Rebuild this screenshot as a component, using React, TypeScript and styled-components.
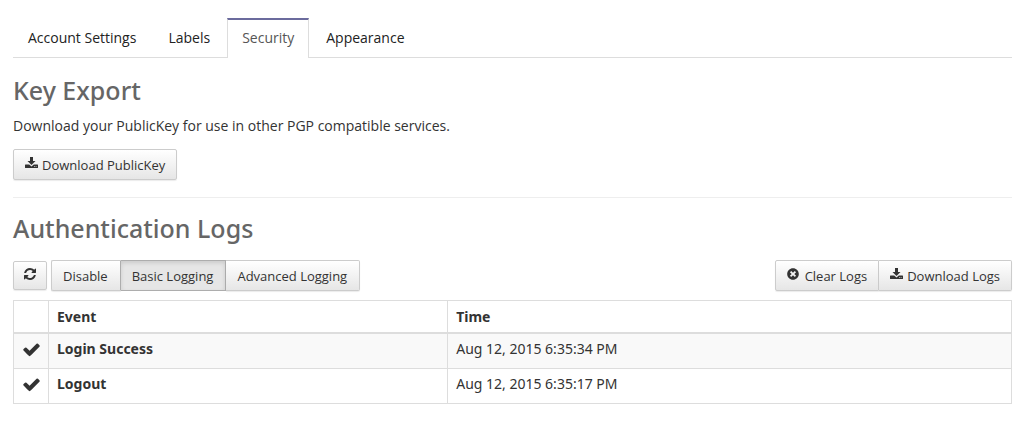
import React from 'react';
import styled, { createGlobalStyle } from 'styled-components';
import { FaTimesCircle } from 'react-icons/fa';

const GlobalStyle = createGlobalStyle`
  * { box-sizing: border-box; }
  body {
    margin: 0;
    background: #fff;
    color: #333;
    font: 14px/20px "Open Sans", "Noto Sans", sans-serif;
  }
`;

const Page = styled.main`
  padding: 18px 12px 24px 13px;
`;

const Tabs = styled.nav`
  display: flex;
  height: 40px;
  border-bottom: 1px solid #ddd;
`;

const Tab = styled.a<{ $active?: boolean }>`
  height: 40px;
  padding: 8px 14px;
  margin-right: 2px;
  border: 1px solid ${p => (p.$active ? '#ddd' : 'transparent')};
  border-top: 2px solid ${p => (p.$active ? '#6b6b9d' : 'transparent')};
  border-bottom: 0;
  background: ${p => (p.$active ? '#fff' : 'transparent')};
  color: ${p => (p.$active ? '#555' : '#222')};
  text-decoration: none;
`;

const Heading = styled.h2`
  margin: 0;
  padding: 16px 0 10px;
  color: #666;
  font-family: "Noto Sans", "Open Sans", sans-serif;
  font-size: 25px;
  font-weight: 500;
  line-height: 32px;
`;

const Section = styled.section`
  & + & {
    margin-top: 17px;
    border-top: 1px solid #eee;
  }

  & + & ${Heading} {
    padding: 14px 0 16px;
  }
`;

const Text = styled.p`
  margin: 0 0 13px;
`;

const Toolbar = styled.div`
  display: flex;
  align-items: center;
  gap: 4px;
`;

const Button = styled.button<{ $active?: boolean; $icon?: boolean }>`
  display: inline-flex;
  align-items: center;
  gap: 4px;
  height: 31px;
  padding: 0 ${p => (p.$icon ? '11px' : '12px')} 0 11px;
  border: 1px solid ${p => (p.$active ? '#adadad' : '#ccc')};
  border-radius: 2px;
  background: ${p => (p.$active ? '#e6e6e6' : 'linear-gradient(#fff, #e6e6e6)')};
  box-shadow: ${p => (p.$active ? 'inset 0 2px 4px rgba(0, 0, 0, 0.12)' : '0 1px 1px rgba(0, 0, 0, 0.08)')};
  color: #333;
  font: 13px/20px "Open Sans", "Noto Sans", sans-serif;
  white-space: nowrap;
`;

const RefreshButton = styled(Button)`
  justify-content: center;
  width: 34px;
  height: 29px;
  padding: 0 0 3px;
`;

const Group = styled.div<{ $end?: boolean }>`
  display: flex;
  margin-left: ${p => (p.$end ? 'auto' : '0')};

  ${Button} { border-radius: 0; }
  ${Button}:first-child { border-radius: 2px 0 0 2px; }
  ${Button}:last-child { border-radius: 0 2px 2px 0; }
  ${Button} + ${Button} { border-left: 0; }
  ${Button}:has(+ [aria-pressed='true']) { border-right-color: #adadad; }
`;

const IconSlot = styled.span<{ $wide?: boolean }>`
  display: flex;
  width: ${p => (p.$wide ? '14px' : '13px')};
  padding-bottom: 3px;
`;

const Table = styled.table`
  width: 100%;
  margin-top: 9px;
  border-collapse: collapse;
  table-layout: fixed;
  border: 1px solid #ddd;
  font-family: "Noto Sans", "Open Sans", sans-serif;
`;

const IconColumn = styled.col`
  width: 35px;
`;

const EventColumn = styled.col`
  width: 40%;
`;

const Cell = styled.td`
  padding: 5px 8px 9px;
  border: 1px solid #ddd;
  text-align: left;
`;

const HeadCell = styled.th`
  padding: 6px 8px 5px;
  border: 1px solid #ddd;
  border-bottom: 2px solid #ddd;
  text-align: left;
`;

const Row = styled.tr<{ $striped?: boolean }>`
  background: ${p => (p.$striped ? '#f9f9f9' : '#fff')};
`;

const Glyph = styled.svg`
  display: block;
  fill: #333;
`;

const DownloadIcon = () => (
  <Glyph width="13" height="12" viewBox="0 0 13 12" aria-hidden="true">
    <path d="M5 0h3v4h2.500L6.500 8 2.500 4H5z" />
    <path fillRule="evenodd" d="M.5 7.500h3.700L6.500 9.500l2.300-2H12.500q.5 0 .5.5v2.500q0 .5-.5.500H.5q-.5 0-.5-.5V8q0-.5.500-.5zM9 9.300v.8h.8v-.8zm1.700 0v.8h.8v-.8z" />
  </Glyph>
);

const RefreshIcon = () => (
  <Glyph width="14" height="14" viewBox="0 0 1792 1792" aria-hidden="true">
    <path d="M1639 1056q0 5-1 7-64 268-268 434.500t-478 166.500q-146 0-282.500-55t-243.500-157l-129 129q-19 19-45 19t-45-19-19-45v-448q0-26 19-45t45-19h448q26 0 45 19t19 45-19 45l-137 137q71 66 161 102t187 36q134 0 250-65t186-179q11-17 53-117 8-23 30-23h192q13 0 22.500 9.500t9.500 22.500zm25-800v448q0 26-19 45t-45 19h-448q-26 0-45-19t-19-45 19-45l138-138q-148-137-349-137-134 0-250 65t-186 179q-11 17-53 117-8 23-30 23h-199q-13 0-22.500-9.500t-9.500-22.500v-7q65-268 270-434.500t480-166.500q146 0 284 55.500t245 156.500l130-129q19-19 45-19t45 19 19 45z" />
  </Glyph>
);

const CheckIcon = () => (
  <Glyph width="19" height="19" viewBox="0 0 1792 1792" role="img" aria-label="Success">
    <path d="M1671 566q0 40-28 68l-724 724-136 136q-28 28-68 28t-68-28l-136-136-362-362q-28-28-28-68t28-68l136-136q28-28 68-28t68 28l294 295 656-657q28-28 68-28t68 28l136 136q28 28 28 68z" />
  </Glyph>
);

const events = [
  { name: 'Login Success', time: 'Aug 12, 2015 6:35:34 PM' },
  { name: 'Logout', time: 'Aug 12, 2015 6:35:17 PM' },
];

export default function App() {
  return (
    <Page>
      <GlobalStyle />
      <Tabs>
        <Tab href="#account">Account Settings</Tab>
        <Tab href="#labels">Labels</Tab>
        <Tab href="#security" $active aria-current="page">Security</Tab>
        <Tab href="#appearance">Appearance</Tab>
      </Tabs>
      <Section>
        <Heading>Key Export</Heading>
        <Text>Download your PublicKey for use in other PGP compatible services.</Text>
        <Button $icon><IconSlot><DownloadIcon /></IconSlot>Download PublicKey</Button>
      </Section>
      <Section>
        <Heading>Authentication Logs</Heading>
        <Toolbar>
          <RefreshButton aria-label="Refresh"><RefreshIcon /></RefreshButton>
          <Group>
            <Button>Disable</Button>
            <Button $active aria-pressed="true">Basic Logging</Button>
            <Button>Advanced Logging</Button>
          </Group>
          <Group $end>
            <Button $icon><IconSlot $wide><FaTimesCircle size={12} /></IconSlot>Clear Logs</Button>
            <Button $icon><IconSlot><DownloadIcon /></IconSlot>Download Logs</Button>
          </Group>
        </Toolbar>
        <Table>
          <colgroup>
            <IconColumn />
            <EventColumn />
            <col />
          </colgroup>
          <thead>
            <tr>
              <HeadCell />
              <HeadCell>Event</HeadCell>
              <HeadCell>Time</HeadCell>
            </tr>
          </thead>
          <tbody>
            {events.map((e, i) => (
              <Row key={e.name} $striped={i % 2 === 0}>
                <Cell><CheckIcon /></Cell>
                <Cell as="th" scope="row">{e.name}</Cell>
                <Cell>{e.time}</Cell>
              </Row>
            ))}
          </tbody>
        </Table>
      </Section>
    </Page>
  );
}
